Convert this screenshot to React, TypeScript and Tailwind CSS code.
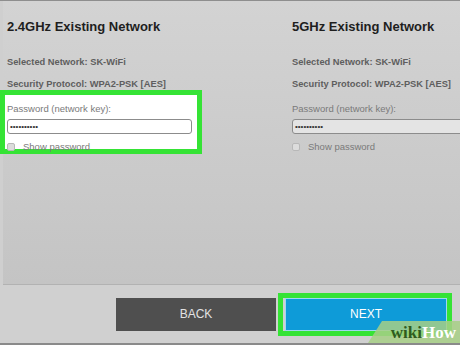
import React from "react";

const networks = [
  { name: "2.4GHz Existing Network", highlighted: true },
  { name: "5GHz Existing Network", highlighted: false },
];

function NetworkColumn({ name, highlighted }: { name: string; highlighted: boolean }) {
  return (
    <div className="flex flex-col">
      <h2 className="h-4 text-[13px] leading-4 font-bold text-[#1e1e1e] mt-[18px]">{name}</h2>
      <p className="mt-[21px] text-[9.3px] leading-3 font-bold text-[#5e5e5e]">Selected Network: SK-WiFi</p>
      <p className="mt-[10px] text-[9.3px] leading-3 font-bold text-[#5e5e5e]">Security Protocol: WPA2-PSK [AES]</p>

      <div className="relative isolate mt-[13px]">
        {highlighted && (
          <div className="absolute -z-10 -left-[7px] -top-[13px] w-[202px] h-[64px] bg-white border-[5px] border-[#35e335]" />
        )}
        <p className="text-[9.5px] leading-3 text-[#7a7a7a]">Password (network key):</p>
        <div
          className={
            "mt-[4px] h-[15px] w-[185px] rounded-[3px] border border-[#8c8c8c] flex items-center pl-[2px] text-[8px] leading-none text-[#333] " +
            (highlighted ? "bg-white" : "bg-[#e4e4e4]")
          }
        >
          ••••••••••
        </div>
        <label className="mt-[7px] flex items-center gap-[8px] text-[9.5px] leading-3 text-[#7a7a7a]">
          <span className="w-[8px] h-[8px] rounded-[2px] border border-[#b8b8b8] bg-[#dcdcdc]" />
          Show password
        </label>
      </div>
    </div>
  );
}

export default function App() {
  return (
    <div
      className="w-[460px] h-[345px] flex flex-col bg-[#cfcfcf] border-t border-[#8e8e8e] border-b-2 border-b-[#8a8a8a] overflow-hidden relative"
      style={{ fontFamily: '"Liberation Sans", Arial, sans-serif' }}
    >
      {/* Main panel */}
      <div className="h-[284px] ml-[3px] flex bg-gradient-to-b from-[#d3d3d3] to-[#c4c4c4] border-b border-[#b2b2b2]">
        <div className="w-[289px] shrink-0 pl-[4px]">
          <NetworkColumn {...networks[0]} />
        </div>
        <div className="flex-1 min-w-0 overflow-hidden">
          <NetworkColumn {...networks[1]} />
        </div>
      </div>

      {/* Footer buttons */}
      <div className="flex-1 flex items-center pl-[116px] gap-[9px] bg-[#d0d0d0]">
        <button className="w-[160px] h-[33px] bg-[#4f4f4f] text-[#e2e2e2] text-[12px]">BACK</button>
        <div className="relative">
          <div className="absolute -left-[7px] -right-[5px] -top-[5px] -bottom-[5px] border-[5px] border-[#35e335]" />
          <button className="relative w-[162px] h-[33px] bg-[#0e9bd8] border border-[#9fd8ef] text-white text-[12px]">NEXT</button>
        </div>
      </div>

      {/* wikiHow watermark */}
      <div className="absolute right-0 bottom-0 w-[92px] h-[22px] flex items-center justify-end pr-[4px]">
        <svg className="absolute inset-0" width="92" height="22" viewBox="0 0 92 22">
          <polygon points="14,0 92,0 92,22 0,22" fill="#a7cf86" fillOpacity="0.85" />
        </svg>
        <span
          className="relative text-[17px] font-bold leading-none"
          style={{ fontFamily: '"Liberation Serif", serif' }}
        >
          <span className="text-[#2f5b1e]">wiki</span>
          <span className="text-white">How</span>
        </span>
      </div>
    </div>
  );
}
